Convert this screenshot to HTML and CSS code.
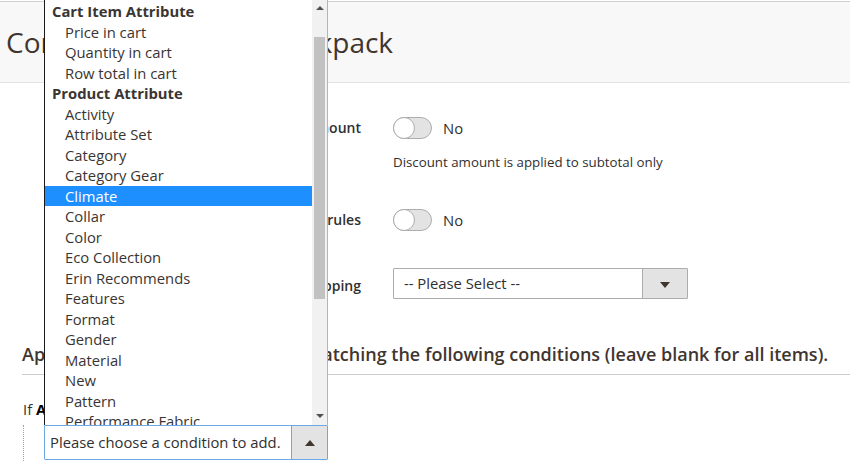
FILE: index.html
```html
<!DOCTYPE html>
<html lang="en">
<head>
    <meta charset="UTF-8">
    <title>Cart Price Rule</title>
    <link rel="stylesheet" href="styles.css">
</head>
<body>
    <header class="page-header">
        <h1 class="page-title">Combined Discount Backpack</h1>
    </header>
    <div class="page-main">
        <div class="fieldset">
            <div class="field">
                <label class="field-label">Apply to Shipping Amount</label>
                <div class="field-control">
                    <div class="switch-row"><span class="switch"></span><span class="switch-text">No</span></div>
                    <div class="note">Discount amount is applied to subtotal only</div>
                </div>
            </div>
            <div class="field">
                <label class="field-label">Discard subsequent rules</label>
                <div class="field-control">
                    <div class="switch-row"><span class="switch"></span><span class="switch-text">No</span></div>
                </div>
            </div>
            <div class="field field-select">
                <label class="field-label">Free Shipping</label>
                <div class="field-control">
                    <div class="select select-wide">
                        <span class="select-value">-- Please Select --</span>
                        <span class="select-btn"><i class="tri tri-down"></i></span>
                    </div>
                </div>
            </div>
        </div>

        <section class="conditions-section">
            <h2 class="section-title">Apply the rule only to cart items matching the following conditions (leave blank for all items).</h2>
            <p class="rule-intro">If <b>ALL</b> of these conditions are <b>TRUE</b> :</p>
            <ul class="conditions">
                <li class="condition-new">
                    <div class="listbox">
                        <div class="listbox-items">
                            <div class="opt-group">Cart Item Attribute</div>
                            <div class="opt">Price in cart</div>
                            <div class="opt">Quantity in cart</div>
                            <div class="opt">Row total in cart</div>
                            <div class="opt-group">Product Attribute</div>
                            <div class="opt">Activity</div>
                            <div class="opt">Attribute Set</div>
                            <div class="opt">Category</div>
                            <div class="opt">Category Gear</div>
                            <div class="opt selected">Climate</div>
                            <div class="opt">Collar</div>
                            <div class="opt">Color</div>
                            <div class="opt">Eco Collection</div>
                            <div class="opt">Erin Recommends</div>
                            <div class="opt">Features</div>
                            <div class="opt">Format</div>
                            <div class="opt">Gender</div>
                            <div class="opt">Material</div>
                            <div class="opt">New</div>
                            <div class="opt">Pattern</div>
                            <div class="opt">Performance Fabric</div>
                            <div class="opt">Purpose</div>
                        </div>
                        <div class="scrollbar">
                            <i class="tri tri-up-small"></i>
                            <div class="scroll-thumb"></div>
                            <i class="tri tri-down-small"></i>
                        </div>
                    </div>
                    <div class="select select-open">
                        <span class="select-value">Please choose a condition to add.</span>
                        <span class="select-btn"><i class="tri tri-up"></i></span>
                    </div>
                </li>
            </ul>
        </section>
    </div>
</body>
</html>
```

FILE: styles.css
```css
body {
    font-family: "Open Sans", "Liberation Sans", sans-serif;
    font-size: 14.8px;
    color: #303030;
    margin: 0;
    padding: 0;
    background: #fff;
    overflow: hidden;
}
.page-header {
    margin-top: 1px;
    border-top: 1px solid #d0d0d0;
    border-bottom: 1px solid #e3e3e3;
    background-color: #f8f8f8;
    height: 80px;
    display: flex;
    align-items: center;
    padding-left: 6px;
}
.page-title {
    margin: 0;
    font-size: 28px;
    font-weight: 400;
    color: #41362f;
    line-height: 34px;
    white-space: nowrap;
}
.page-main {
    padding: 34px 0 0 22px;
}

/* form fields */
.field {
    display: grid;
    grid-template-columns: 339px 1fr;
    column-gap: 32px;
    margin-bottom: 38px;
}
.field-label {
    text-align: right;
    font-size: 14px;
    font-weight: 600;
    line-height: 22px;
    white-space: nowrap;
}
.field + .field + .field {
    margin-top: -1px;
}
.field-select {
    margin-bottom: 0;
}
.field-select .field-label {
    line-height: 31px;
    padding-top: 2px;
}
.switch-row {
    display: flex;
    align-items: center;
    gap: 11px;
    height: 22px;
}
.switch {
    position: relative;
    width: 37px;
    height: 20px;
    border: 1px solid #adadad;
    border-radius: 12px;
    background-color: #e3e3e3;
}
.switch::before {
    content: "";
    position: absolute;
    left: -1px;
    top: -1px;
    width: 20px;
    height: 20px;
    border: 1px solid #adadad;
    border-radius: 50%;
    background: #fff;
}
.switch-text {
    line-height: 22px;
}
.note {
    font-size: 13.3px;
    line-height: 17px;
    margin-top: 15px;
}

/* selects */
.select {
    display: flex;
    align-items: stretch;
    border: 1px solid #adadad;
    border-radius: 1px;
    background: #fff;
    box-sizing: border-box;
}
.select-value {
    flex: 1;
    white-space: nowrap;
    overflow: hidden;
}
.select-btn {
    display: flex;
    align-items: center;
    justify-content: center;
    background-color: #e3e3e3;
    border-left: 1px solid #adadad;
}
.select-wide {
    width: 295px;
    height: 31px;
}
.select-wide .select-value {
    padding-left: 10px;
    line-height: 29px;
}
.select-wide .select-btn {
    width: 44px;
}
.select-open {
    width: 284px;
    height: 35px;
    border-color: #6aa9e6;
}
.select-open .select-value {
    padding-left: 5px;
    line-height: 33px;
}
.select-open .select-btn {
    width: 35px;
    border-left-color: #6aa9e6;
}
.tri {
    width: 0;
    height: 0;
    border-left: 5px solid transparent;
    border-right: 5px solid transparent;
}
.tri-down {
    border-top: 6px solid #41362f;
    margin-top: 2px;
}
.tri-up {
    border-bottom: 6px solid #41362f;
}

/* conditions */
.conditions-section {
    margin-top: 41px;
}
.section-title {
    margin: 0;
    font-size: 18px;
    font-weight: 600;
    color: #41362f;
    line-height: 24px;
    padding-bottom: 8px;
    border-bottom: 1px solid #cccccc;
    white-space: nowrap;
}
.rule-intro {
    margin: 24px 0 6px 1px;
    line-height: 20px;
}
.rule-intro b {
    color: #000;
}
.conditions {
    list-style: none;
    margin: 0 0 0 1px;
    padding: 0 0 0 20px;
    border-left: 1px dotted #a0a0a0;
    height: 60px;
}
.condition-new {
    position: relative;
}

/* open option list */
.listbox {
    position: absolute;
    left: 0;
    bottom: 100%;
    width: 284px;
    height: 425px;
    box-sizing: border-box;
    border-left: 1px solid #1a1a1a;
    border-right: 1px solid #8fbdea;
    background: #fff;
    display: flex;
    overflow: hidden;
    z-index: 5;
}
.listbox-items {
    flex: 1;
    padding-top: 1px;
    color: #3a3532;
}
.opt, .opt-group {
    height: 20.5px;
    line-height: 20.5px;
    white-space: nowrap;
}
.opt-group {
    font-weight: 700;
    padding-left: 7px;
}
.opt {
    padding-left: 20px;
}
.opt.selected {
    background-color: #1e8fff;
    color: #fff;
}
.scrollbar {
    width: 15px;
    background-color: #f1f1f1;
    display: flex;
    flex-direction: column;
    align-items: center;
}
.scroll-thumb {
    width: 11px;
    height: 262px;
    margin-top: 27px;
    background-color: #c1c1c1;
}
.tri-up-small {
    border-left-width: 4px;
    border-right-width: 4px;
    border-bottom: 4px solid #505050;
    margin-top: 6px;
}
.tri-down-small {
    border-left-width: 4px;
    border-right-width: 4px;
    border-top: 4px solid #505050;
    margin-top: auto;
    margin-bottom: 7px;
}
```
